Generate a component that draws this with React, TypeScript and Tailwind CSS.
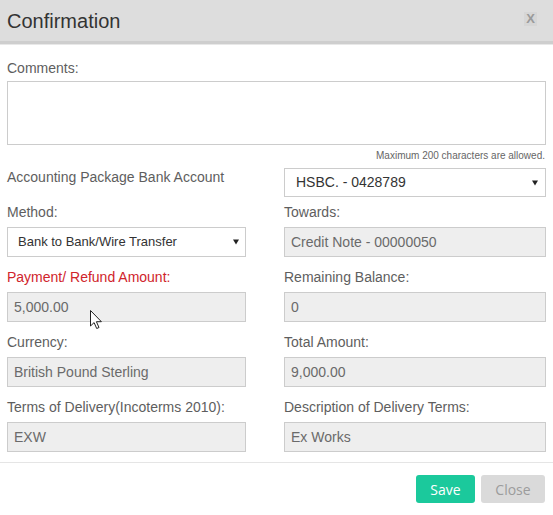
import React from "react";

const font = { fontFamily: '"Liberation Sans", Arial, sans-serif' };

function Caret() {
  return (
    <svg width="6" height="6" viewBox="0 0 6 6" className="shrink-0">
      <path d="M0 0.5h6L3 5.5z" fill="#222" />
    </svg>
  );
}

function Label({ children, red }: { children: React.ReactNode; red?: boolean }) {
  return (
    <div
      className={`h-[15px] text-[14px] leading-[15px] mb-[7px] ${
        red ? "text-[#d0242b]" : "text-[#5e5e5e]"
      }`}
    >
      {children}
    </div>
  );
}

function ReadOnly({ value }: { value: string }) {
  return (
    <div className="h-[30px] border border-[#ccc] bg-[#eeeeee] px-[6px] text-[14px] leading-[28px] text-[#6a6a6a]">
      {value}
    </div>
  );
}

function Field({
  label,
  children,
  red,
}: {
  label: string;
  children: React.ReactNode;
  red?: boolean;
}) {
  return (
    <div className="mb-[13px]">
      <Label red={red}>{label}</Label>
      {children}
    </div>
  );
}

export default function App() {
  return (
    <div className="relative h-[515px] w-[553px] overflow-hidden bg-white" style={font}>
      {/* header */}
      <div className="flex h-[44px] items-center justify-between border-b-[3px] border-[#cecece] bg-[#dddddd] pl-[7px] pr-[16px] shadow-[0_1px_0_#e8e8e8]">
        <span className="text-[20px] leading-none text-[#333]">Confirmation</span>
        <span className="mt-[-3px] bg-[#d6d6d6] px-[2px] text-[13px] font-bold leading-[14px] text-[#9a9a9a]">
          X
        </span>
      </div>

      <div className="px-[7px] pt-[17px]">
        <div className="h-[15px] text-[14px] leading-[15px] text-[#5e5e5e]">Comments:</div>
        <div className="mt-[5px] h-[64px] border border-[#ccc] bg-white" />
        <div className="mt-[5px] h-[11px] pr-[1px] text-right text-[10px] leading-[11px] text-[#666]">
          Maximum 200 characters are allowed.
        </div>

        <div className="mt-[7px] grid grid-cols-[239px_262px] gap-x-[38px]">
          <div className="pt-[2px] text-[14px] leading-[15px] text-[#5e5e5e]">
            Accounting Package Bank Account
          </div>
          <div className="mb-[8px]">
            <div className="flex h-[29px] items-center justify-between border border-[#ccc] bg-white pl-[11px] pr-[7px] text-[14px] text-[#333]">
              <span>HSBC. - 0428789</span>
              <Caret />
            </div>
          </div>

          <Field label="Method:">
            <div className="flex h-[30px] items-center justify-between border border-[#ccc] bg-white pl-[10px] pr-[6px] text-[13px] text-[#333]">
              <span>Bank to Bank/Wire Transfer</span>
              <Caret />
            </div>
          </Field>
          <Field label="Towards:">
            <ReadOnly value="Credit Note - 00000050" />
          </Field>

          <Field label="Payment/ Refund Amount:" red>
            <ReadOnly value="5,000.00" />
          </Field>
          <Field label="Remaining Balance:">
            <ReadOnly value="0" />
          </Field>

          <Field label="Currency:">
            <ReadOnly value="British Pound Sterling" />
          </Field>
          <Field label="Total Amount:">
            <ReadOnly value="9,000.00" />
          </Field>

          <Field label="Terms of Delivery(Incoterms 2010):">
            <ReadOnly value="EXW" />
          </Field>
          <Field label="Description of Delivery Terms:">
            <ReadOnly value="Ex Works" />
          </Field>
        </div>
      </div>

      {/* footer */}
      <div className="mt-[-3px] border-t border-[#e5e5e5] pt-[12px] pr-[8px]">
        <div
          className="flex justify-end gap-[6px]"
          style={{ fontFamily: '"Open Sans", sans-serif' }}
        >
          <button className="h-[28px] w-[59px] rounded-[3px] bg-[#1bc99c] text-[14px] text-white">
            Save
          </button>
          <button className="h-[28px] w-[64px] rounded-[3px] bg-[#dadada] text-[14px] text-[#9c9c9c]">
            Close
          </button>
        </div>
      </div>

      {/* mouse cursor */}
      <svg
        className="absolute left-[90px] top-[310px]"
        width="13"
        height="19"
        viewBox="0 0 13 19"
      >
        <path
          d="M0.5 0.5v15.5l3.6-3.4 2.6 5.9 2.3-1-2.6-5.8h5z"
          fill="#fff"
          stroke="#222"
          strokeWidth="1"
          strokeLinejoin="round"
        />
      </svg>
    </div>
  );
}
